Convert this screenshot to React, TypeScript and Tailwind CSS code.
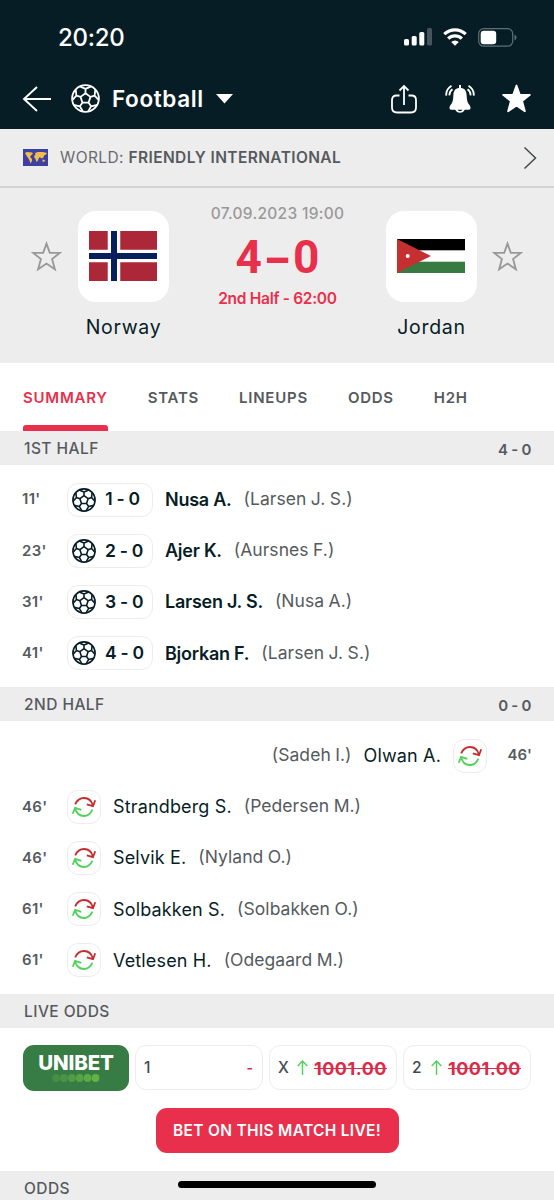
type Incident = {
    minute: string;
    name: string;
    extra: string;
    score?: string;
    away?: boolean;
};

const tabs = ["SUMMARY", "STATS", "LINEUPS", "ODDS", "H2H"];

const firstHalf: Incident[] = [
    { minute: "11'", score: "1 - 0", name: "Nusa A.", extra: "(Larsen J. S.)" },
    { minute: "23'", score: "2 - 0", name: "Ajer K.", extra: "(Aursnes F.)" },
    { minute: "31'", score: "3 - 0", name: "Larsen J. S.", extra: "(Nusa A.)" },
    { minute: "41'", score: "4 - 0", name: "Bjorkan F.", extra: "(Larsen J. S.)" },
];

const secondHalf: Incident[] = [
    { minute: "46'", name: "Olwan A.", extra: "(Sadeh I.)", away: true },
    { minute: "46'", name: "Strandberg S.", extra: "(Pedersen M.)" },
    { minute: "46'", name: "Selvik E.", extra: "(Nyland O.)" },
    { minute: "61'", name: "Solbakken S.", extra: "(Solbakken O.)" },
    { minute: "61'", name: "Vetlesen H.", extra: "(Odegaard M.)" },
];

const point = (radius: number, deg: number) => {
    const a = ((deg - 90) * Math.PI) / 180;
    return `${(14.5 + radius * Math.cos(a)).toFixed(2)} ${(14.5 + radius * Math.sin(a)).toFixed(2)}`;
};

// centre pentagon, then a spoke and a fan to the rim for each corner
const ballPath = [0, 72, 144, 216, 288]
    .map(
        (d) =>
            `M${point(5.2, d)}L${point(5.2, d + 72)}M${point(5.2, d)}L${point(9.6, d)}M${point(13.4, d - 25)}L${point(9.6, d)}L${point(13.4, d + 25)}`
    )
    .join("");

function Ball({ className, stroke }: { className: string; stroke: number }) {
    return (
        <svg viewBox="0 0 29 29" className={className} fill="none" stroke="currentColor" strokeWidth={stroke} strokeLinejoin="round">
            <circle cx="14.5" cy="14.5" r="13.4" />
            <path d={ballPath} />
        </svg>
    );
}

function Substitution() {
    return (
        <svg viewBox="0 0 24 22" className="w-6 h-[22px] shrink-0" fill="none" strokeWidth="1.8">
            <path d="M3.2 8.3C5.2 3.8 8.5 2 12 2c4.2 0 7.6 2.7 8.8 7.2M14.8 8.3l6.2 1.9 2.2-6" stroke="#c52c2c" />
            <path d="M20.4 13.7C18.5 18 15.3 20 12 20c-4.2 0-7.6-2.7-8.8-7.2M.8 17.8l2.3-6 6.2 2" stroke="#50d258" />
        </svg>
    );
}

function Star({ filled, className }: { filled?: boolean; className: string }) {
    return (
        <svg viewBox="0 0 30 30" className={className} fill={filled ? "currentColor" : "none"} stroke="currentColor" strokeWidth="1.8" strokeLinejoin={filled ? "round" : "miter"}>
            <path d="M15 2.5l3.2 8.9 9.7.1-7.5 6 2.7 9.8-8.1-5.5-8.1 5.5 2.7-9.8-7.5-6 9.7-.1z" />
        </svg>
    );
}

function StatusBar() {
    return (
        <div className="h-[68px] flex items-center justify-between pl-[58px] pr-[37px] pt-[6px]">
            <span className="pt-[2px] text-[24px] leading-none font-medium tracking-[-0.3px]">20:20</span>
            <div className="flex items-center gap-[11px]">
                <svg viewBox="0 0 28 18" className="w-7 h-[18px]" fill="currentColor">
                    <rect x="0" y="11" width="5" height="6.5" rx="1.5" />
                    <rect x="7.7" y="8" width="5" height="9.5" rx="1.5" />
                    <rect x="15.3" y="4" width="5" height="13.5" rx="1.5" />
                    <rect x="23" y="0" width="5" height="17.5" rx="1.5" opacity=".25" />
                </svg>
                <svg viewBox="0 0 24 18" className="w-6 h-[18px]" fill="none" stroke="currentColor" strokeWidth="3.2">
                    <path d="M1.3 6.2a15.3 15.3 0 0 1 21.4 0M5.2 10.6a9.7 9.7 0 0 1 13.6 0" />
                    <path d="M8.2 14a5.5 5.5 0 0 1 7.6 0L12 17.7z" fill="currentColor" stroke="none" />
                </svg>
                <svg viewBox="0 0 39 19" className="w-[39px] h-[19px]">
                    <rect x=".7" y=".7" width="34" height="17.5" rx="5" fill="none" stroke="#5c7075" strokeWidth="1.2" />
                    <rect x="2.7" y="2.7" width="15.5" height="13.5" rx="3" fill="#fff" />
                    <path d="M36.5 6.5q2 1 2 3t-2 3z" fill="#5c7075" />
                </svg>
            </div>
        </div>
    );
}

function Toolbar() {
    return (
        <div className="h-[61px] flex items-center px-[22px]">
            <svg viewBox="0 0 30 28" className="w-[30px] h-7" fill="none" stroke="currentColor" strokeWidth="1.9">
                <path d="M15 2L2 14l13 12M2 14h27" />
            </svg>
            <Ball className="size-[29px] ml-[19px]" stroke={1.8} />
            <span className="ml-[12px] pt-px text-[22.5px] leading-none font-semibold tracking-[0.6px]">Football</span>
            <svg viewBox="0 0 17 10" className="w-[17px] h-[10px] ml-[12px]" fill="currentColor">
                <path d="M0 0h17L8.5 9.5z" />
            </svg>
            <div className="ml-auto flex items-center gap-[28px]">
                <svg viewBox="0 0 26 30" className="w-[26px] h-[30px]" fill="none" stroke="currentColor" strokeWidth="1.8">
                    <path d="M8.5 11.5H5.5Q1 11.5 1 16v7.5Q1 28.5 6 28.5h14q5 0 5-5V16q0-4.5-4.5-4.5h-3M13 21V2M8.5 6.5L13 2l4.5 4.5" />
                </svg>
                <svg viewBox="0 0 30 30" className="w-[30px] h-[30px]" fill="currentColor">
                    <path d="M14 1h2v3.1c4 .5 5.4 3 5.6 6.9.2 5 .9 7.5 2.2 9.2 1 1.2 1.7 2.2 1.7 3.5 0 1.2-.5 2-1.5 2h-4.3a5 4.5 0 0 1-9.4 0H6c-1 0-1.5-.8-1.5-2 0-1.3.7-2.3 1.7-3.5 1.3-1.7 2-4.2 2.2-9.2.2-3.9 1.6-6.4 5.6-6.9z" />
                    <path d="M12.5 25.8h5a2.6 2 0 0 1-5 0z" fill="#071d26" />
                    <path d="M6.5 1.7C2.8 4 .9 7.6 1.3 11.7M7.5 5.3C5.2 6.9 4.3 9 4.5 11.3M23.5 1.7c3.7 2.3 5.6 5.9 5.2 10M22.5 5.3c2.3 1.6 3.2 3.7 3 6" fill="none" stroke="currentColor" strokeWidth="1.8" />
                </svg>
                <Star filled className="size-[31px] -ml-[2px]" />
            </div>
        </div>
    );
}

function Team({ name, children }: { name: string; children: React.ReactNode }) {
    return (
        <div className="w-[91px] flex flex-col items-center pt-[23px]">
            <div className="w-[91px] h-[91px] rounded-[18px] bg-white flex items-center justify-center pr-[2px] pb-px">{children}</div>
            <span className="mt-[12px] text-[19.5px] leading-[26px] tracking-[0.7px] text-[#071d26]">{name}</span>
        </div>
    );
}

function SectionBar({ title, score }: { title: string; score?: string }) {
    return (
        <div className="h-[34px] pt-[2px] bg-[#eeeded] pl-[24px] pr-[23px] flex items-center justify-between text-[15.5px] leading-none font-medium text-[#555a5e]">
            <span className="tracking-[0.45px]">{title}</span>
            {score && <span className="text-[15px] tracking-[-0.3px] font-semibold">{score}</span>}
        </div>
    );
}

function IncidentRow({ item }: { item: Incident }) {
    return (
        <div className={`h-[51.2px] flex items-center px-[22px] ${item.away ? "flex-row-reverse" : ""}`}>
            <span className={`w-[45px] text-[15px] font-semibold text-[#555a5e] ${item.away ? "text-right" : "tracking-[0.3px]"}`}>{item.minute}</span>
            <div className={`${item.score ? "w-[86px] pl-[4px]" : "w-[34px] justify-center"} h-[34px] shrink-0 rounded-[11px] border-[1.5px] border-[#eeeded] flex items-center`}>
                {item.score ? (
                    <>
                        <Ball className="size-[24px] text-[#071d26] shrink-0" stroke={1.9} />
                        <span className="w-[35px] ml-[9px] text-center text-[17.5px] font-semibold tracking-[-0.3px] text-[#071d26] whitespace-nowrap">{item.score}</span>
                    </>
                ) : (
                    <Substitution />
                )}
            </div>
            <div className={`mx-[12px] flex gap-[12px] text-[18px] whitespace-nowrap ${item.away ? "flex-row-reverse" : ""}`}>
                <span className={`text-[#071d26] ${item.score ? "font-semibold tracking-[-0.25px]" : "tracking-[0.15px]"}`}>{item.name}</span>
                <span className="text-[17.5px] text-[#555a5e] tracking-[0.05px] [word-spacing:-0.5px]">{item.extra}</span>
            </div>
        </div>
    );
}

function Odd({ label, value }: { label: string; value?: string }) {
    return (
        <div className="w-[128px] h-[45px] rounded-[11px] border-[1.5px] border-[#eeeded] flex items-center justify-between pl-[8px] pr-[9px]">
            <span className="pt-px text-[15.5px] font-medium text-[#44494d]">{label}</span>
            {value ? (
                <div className="flex items-center gap-[6px]">
                    <svg viewBox="0 0 11 15" className="w-[11px] h-[15px]" fill="none" stroke="#50d258" strokeWidth="1.4">
                        <path d="M5.5 15V1M.7 6l4.8-5 4.8 5" />
                    </svg>
                    <span className="pt-px text-[18px] font-bold tracking-[0.5px] text-[#dc2b48] line-through">{value}</span>
                </div>
            ) : (
                <span className="text-[14px] font-semibold text-[#dc2b48]">-</span>
            )}
        </div>
    );
}

export default function App() {
    return (
        <div className="relative w-[554px] h-[1200px] overflow-hidden bg-white font-['Inter',sans-serif]">

            <header className="h-[129px] bg-[#071d26] text-white">
                <StatusBar />
                <Toolbar />
            </header>

            {/* LEAGUE */}
            <div className="h-[59px] bg-[#eeeded] border-b-2 border-[#d3d3d3] flex items-center pl-[23px] pr-[17px]">
                <svg viewBox="0 0 25 17" className="w-[25px] h-[17px]">
                    <rect width="25" height="17" fill="#3d40a3" />
                    <path d="M2 4l2-1 5 .5 1 1-2 2-1 1.5 2 2v2l-1.5 2.5-1-3-1-2-1.5-2zM12 4l3-1 5 0 4 1-1 1.5-2 1-.5 2-2 1-1-1-1.5 0-1 3-1.5 1.5-1-3-1.500-2 .5-1.500 1-1zM19.500 10.500l2.500.5-.5 1.700-2 .1z" fill="#f2bd4b" />
                </svg>
                <span className="ml-[12px] text-[15.5px] leading-none tracking-[0.38px] text-[#666a6d]">
                    WORLD: <span className="font-semibold text-[#555a5e]">FRIENDLY INTERNATIONAL</span>
                </span>
                <svg viewBox="0 0 14 24" className="w-[14px] h-6 ml-auto" fill="none" stroke="#44494d" strokeWidth="1.5">
                    <path d="M1.5 1.5L12.5 12l-11 10.5" />
                </svg>
            </div>

            {/* MATCH */}
            <div className="h-[175px] bg-[#eeeded] flex justify-between px-[31px]">
                <div className="flex">
                    <Star className="size-[31px] mt-[53px] mr-[16px] text-[#999]" />
                    <Team name="Norway">
                        <svg viewBox="0 0 68 50" className="w-[68px] h-[50px]">
                            <rect width="68" height="50" fill="#ac2838" />
                            <path d="M25 0v50M0 25h68" stroke="#fff" strokeWidth="12.5" />
                            <path d="M25 0v50M0 25h68" stroke="#07205b" strokeWidth="6" />
                        </svg>
                    </Team>
                </div>
                <div className="pt-[17px] flex flex-col items-center whitespace-nowrap">
                    <span className="text-[15.5px] leading-[18px] font-medium tracking-[0.3px] text-[#999]">07.09.2023 19:00</span>
                    <div className="mt-[8px] flex items-center justify-center text-[46px] leading-[52px] font-bold text-[#e8304c] font-['Roboto',sans-serif]">
                        <span>4</span>
                        <span className="w-[31px] text-center scale-x-[1.4] font-['Inter',sans-serif]">-</span>
                        <span>0</span>
                    </div>
                    <span className="mt-[6px] text-[15.5px] leading-[20px] font-semibold tracking-[-0.3px] text-[#e8304c]">2nd Half - 62:00</span>
                </div>
                <div className="flex">
                    <Team name="Jordan">
                        <svg viewBox="0 0 68 34" className="w-[68px] h-[34px]">
                            <rect width="68" height="11.3" fill="#000" />
                            <rect y="22.7" width="68" height="11.3" fill="#377b43" />
                            <path d="M0 0l34 17L0 34z" fill="#c52f31" />
                            <circle cx="10.7" cy="17" r="2" fill="#fff" />
                        </svg>
                    </Team>
                    <Star className="size-[31px] mt-[53px] ml-[15px] text-[#999]" />
                </div>
            </div>

            {/* TABS */}
            <div className="h-[68px] flex items-stretch gap-[40px] pl-[23px]">
                {tabs.map((tab, i) => (
                    <div
                        key={tab}
                        className={`flex flex-col text-[15px] leading-[69px] font-semibold tracking-[0.75px] ${i === 0 ? "text-[#e8304c]" : "text-[#555a5e]"}`}
                    >
                        <span className="h-[62px]">{tab}</span>
                        {i === 0 && <div className="h-[6px] rounded-t-[3px] bg-[#e8304c]" />}
                    </div>
                ))}
            </div>

            <SectionBar title="1ST HALF" score="4 - 0" />
            <div className="h-[222px] pt-[9px]">
                {firstHalf.map((item) => (
                    <IncidentRow key={item.name} item={item} />
                ))}
            </div>

            <SectionBar title="2ND HALF" score="0 - 0" />
            <div className="h-[273px] pt-[9px]">
                {secondHalf.map((item) => (
                    <IncidentRow key={item.name} item={item} />
                ))}
            </div>

            {/* ODDS */}
            <SectionBar title="LIVE ODDS" />
            <div className="h-[143px] pt-[17px] px-[23px]">
                <div className="flex justify-between">
                    <div className="w-[106px] h-[46px] rounded-[11px] bg-[#377b45] flex flex-col items-center pt-[9px]">
                        <span className="text-[20.5px] leading-[18px] font-extrabold tracking-[-0.2px] text-white">UNIBET</span>
                        <svg viewBox="0 0 48 8" className="w-[48px] h-2 mt-[2px]" fill="#63b246">
                            {[0.35, 0.45, 0.6, 0.75, 0.88, 1].map((opacity, i) => (
                                <circle key={i} cx={4 + i * 7.9} cy="4" r="3.9" opacity={opacity} />
                            ))}
                        </svg>
                    </div>
                    <Odd label="1" />
                    <Odd label="X" value="1001.00" />
                    <Odd label="2" value="1001.00" />
                </div>
                <button className="block mx-auto mt-[17px] w-[243px] h-[45px] pt-px rounded-[11px] bg-[#e8304c] text-white text-[15.5px] font-semibold tracking-[0.3px] whitespace-nowrap">
                    BET ON THIS MATCH LIVE!
                </button>
            </div>

            <SectionBar title="ODDS" />

            {/* home indicator */}
            <div className="absolute left-[178px] top-[1181px] w-[198px] h-[7px] rounded-full bg-black" />
        </div>
    );
}
